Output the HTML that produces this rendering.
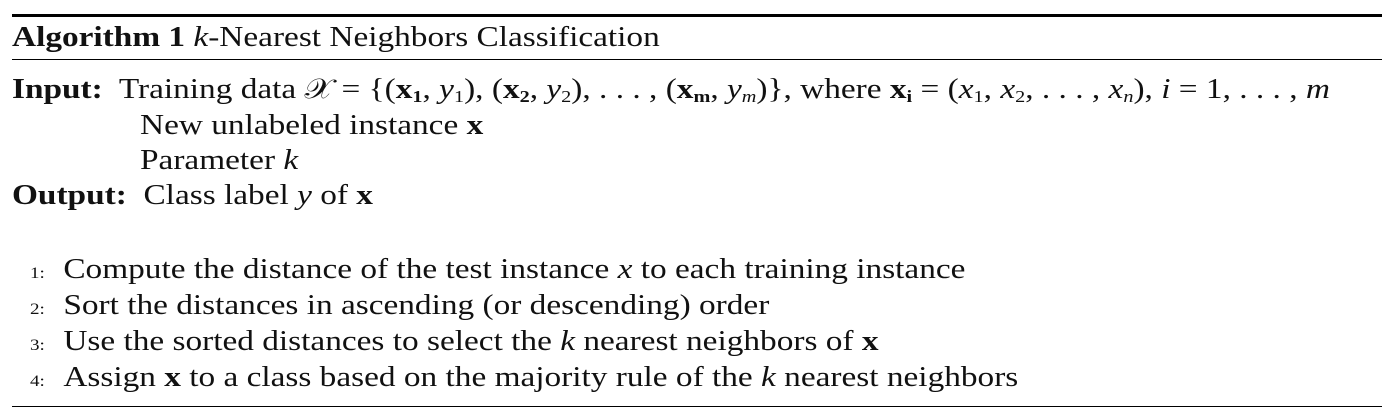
<!DOCTYPE html>
<html><head><style>
body{margin:0;width:1395px;height:418px;background:#fff;overflow:hidden;font-family:"Liberation Serif",serif;color:#111;}
.r{position:absolute;left:12px;width:1370px;background:#000}
.l{position:absolute;white-space:nowrap;font-size:28px;line-height:26px;transform:scaleX(1.19);transform-origin:0 0;}
b{font-weight:bold}
i{font-style:italic}
.n{font-size:16px;display:inline-block;width:28px}
sub{font-size:17px;vertical-align:-4px;line-height:0}
</style></head><body>
<div class="r" style="top:14px;height:2.5px"></div>
<div class="r" style="top:59px;height:1.2px"></div>
<div class="r" style="top:406px;height:1.2px"></div>
<div class="l" style="left:12px;top:25px"><b>Algorithm 1</b> <i>k</i>-Nearest Neighbors Classification</div>
<div class="l" style="left:12px;top:77px"><b>Input:</b>&nbsp; Training data 𝒳 = {(<b>x</b><sub><b>1</b></sub>, <i>y</i><sub>1</sub>), (<b>x</b><sub><b>2</b></sub>, <i>y</i><sub>2</sub>), . . . , (<b>x</b><sub><b>m</b></sub>, <i>y<sub>m</sub></i>)}, where <b>x</b><sub><b>i</b></sub> = (<i>x</i><sub>1</sub>, <i>x</i><sub>2</sub>, . . . , <i>x<sub>n</sub></i>), <i>i</i> = 1, . . . , <i>m</i></div>
<div class="l" style="left:140px;top:113px">New unlabeled instance <b>x</b></div>
<div class="l" style="left:140px;top:148px">Parameter <i>k</i></div>
<div class="l" style="left:12px;top:183px"><b>Output:</b>&nbsp; Class label <i>y</i> of <b>x</b></div>
<div class="l" style="left:30px;top:257px"><span class="n">1:</span>Compute the distance of the test instance <i>x</i> to each training instance</div>
<div class="l" style="left:30px;top:293px"><span class="n">2:</span>Sort the distances in ascending (or descending) order</div>
<div class="l" style="left:30px;top:329px"><span class="n">3:</span>Use the sorted distances to select the <i>k</i> nearest neighbors of <b>x</b></div>
<div class="l" style="left:30px;top:365px"><span class="n">4:</span>Assign <b>x</b> to a class based on the majority rule of the <i>k</i> nearest neighbors</div>
</body></html>
